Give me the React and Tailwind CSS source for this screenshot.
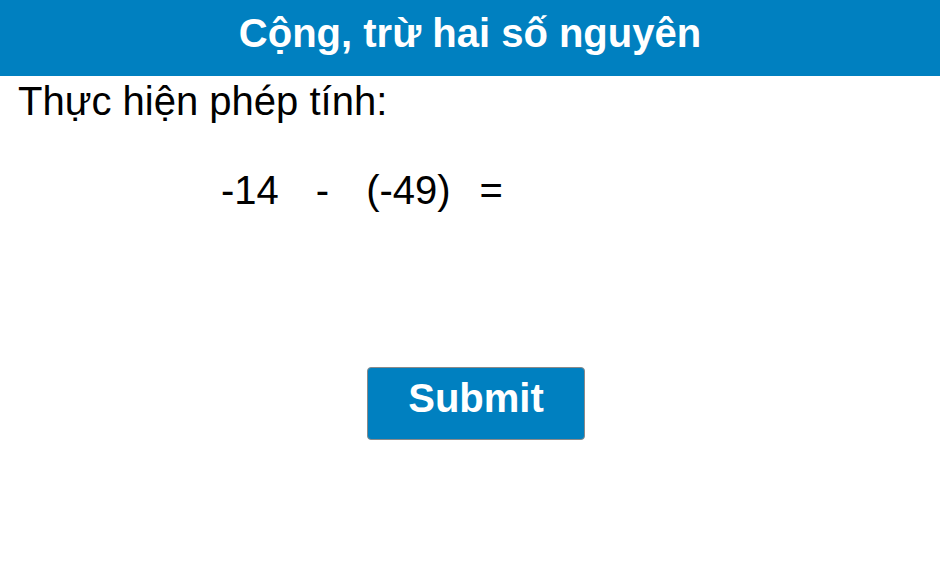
export default function App() {
  return (
    <div className="w-[940px] h-[564px] bg-white font-['Liberation_Sans',Arial,sans-serif] text-black">
      <div className="h-[76px] bg-[#0080c0] pt-[10px] text-center">
        <h1 className="text-[40px] leading-[46px] font-bold text-white">Cộng, trừ hai số nguyên</h1>
      </div>

      <p className="pl-[18px] pt-[2px] text-[40px] leading-[46px]">Thực hiện phép tính:</p>

      <div className="mt-[43px] ml-[221px] flex text-[40px] leading-[46px]">
        <span>-14</span>
        <span className="ml-[37px]">-</span>
        <span className="ml-[37px]">(-49)</span>
        <span className="ml-[29px]">=</span>
      </div>

      <button className="mt-[154px] ml-[367px] block h-[73px] w-[218px] rounded-[4px] border border-[#8a8a8a] bg-[#0080c0] pb-[12px] text-[40px] leading-[46px] font-bold text-white">
        Submit
      </button>
    </div>
  );
}
